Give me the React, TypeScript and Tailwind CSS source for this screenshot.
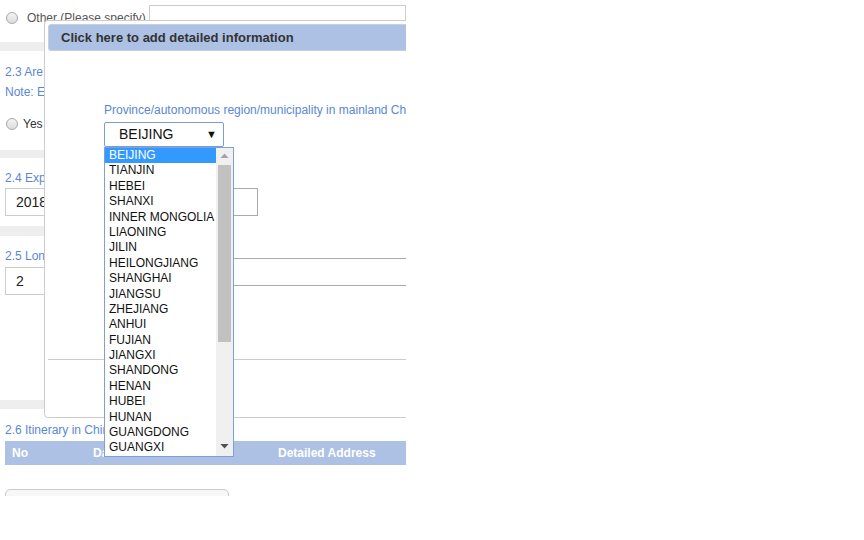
const provinces = [
  'BEIJING',
  'TIANJIN',
  'HEBEI',
  'SHANXI',
  'INNER MONGOLIA',
  'LIAONING',
  'JILIN',
  'HEILONGJIANG',
  'SHANGHAI',
  'JIANGSU',
  'ZHEJIANG',
  'ANHUI',
  'FUJIAN',
  'JIANGXI',
  'SHANDONG',
  'HENAN',
  'HUBEI',
  'HUNAN',
  'GUANGDONG',
  'GUANGXI',
]

function Radio() {
  return (
    <span className="inline-block h-[12px] w-[12px] flex-none rounded-full border border-[#a9a9a9] bg-gradient-to-b from-[#f4f4f4] to-[#dcdcdc]" />
  )
}

function Band({ className = '' }: { className?: string }) {
  return <div className={'w-full bg-[#eeeeee] ' + className} />
}

export default function App() {
  return (
    <div className="h-[540px] w-[864px] bg-white font-['Liberation_Sans',Arial,sans-serif]">
      <div className="relative h-[496px] w-[406px] overflow-hidden">
        {/* form underneath */}
        <div className="flex h-[42px] items-start pt-[5px]">
          <div className="flex items-center pl-[6px] pt-[5px]">
            <Radio />
            <span className="ml-[9px] text-[12px] leading-[16px] text-[#555]">
              Other (Please specify)
            </span>
          </div>
          <div className="ml-auto h-[26px] w-[257px] border border-[#cccccc]" />
        </div>
        <Band className="h-[9px]" />

        <div className="px-[5px] pt-[13px] text-[12px] leading-[16px] text-[#5a87d3]">
          <p>2.3 Are you travelling with others?</p>
          <p className="mt-[4px]">Note: Enter family members</p>
        </div>
        <div className="mt-[16px] flex items-center pl-[6px]">
          <Radio />
          <span className="ml-[5px] text-[12px] leading-[16px] text-[#333]">Yes</span>
        </div>
        <Band className="mt-[18px] h-[8px]" />

        <div className="px-[5px] pt-[12px]">
          <p className="text-[12px] leading-[16px] text-[#5a87d3]">2.4 Expected date</p>
          <div className="mt-[2px] flex h-[28px] w-[253px] items-center border border-[#cccccc] pl-[10px] text-[14px] text-[#222]">
            2018-06-12
          </div>
        </div>
        <Band className="mt-[10px] h-[10px]" />

        <div className="px-[5px] pt-[12px]">
          <p className="text-[12px] leading-[16px] text-[#5a87d3]">2.5 Longest stay</p>
          <div className="mt-[3px] flex h-[28px] w-[253px] items-center border border-[#cccccc] pl-[10px] text-[14px] text-[#222]">
            2
          </div>
        </div>
        <Band className="mt-[105px] h-[9px]" />

        <div className="pl-[5px] pt-[13px]">
          <p className="text-[12px] leading-[16px] text-[#5a87d3]">2.6 Itinerary in China</p>
          <div className="mt-[3px] flex h-[24px] items-center bg-[#adc1e4] pl-[7px] text-[12px] font-bold text-white">
            <span className="w-[81px]">No</span>
            <span className="w-[185px]">Date</span>
            <span>Detailed Address</span>
          </div>
          <div className="mt-[24px] h-[30px] w-[224px] rounded-[5px] border border-[#cccccc] bg-[#f7f7f7]" />
        </div>

        {/* modal */}
        <div className="absolute left-[44px] top-[20px] flex h-[398px] w-[430px] flex-col rounded-[4px] border border-[#cccccc] bg-white p-[3px]">
          <div className="flex h-[27px] items-center rounded-[3px] border border-[#c4cfe0] bg-[#adc1e4] pl-[12px] text-[13px] font-bold text-[#333]">
            Click here to add detailed information
          </div>
          <div className="pl-[56px]">
            <p className="mt-[51px] whitespace-nowrap text-[12px] leading-[16px] text-[#5a87d3]">
              Province/autonomous region/municipality in mainland China
            </p>
            <div className="mt-[4px] flex h-[25px] w-[120px] items-center justify-between rounded-[2px] border border-[#7b9cd6] pl-[14px] pr-[6px] text-[14px] text-[#111]">
              <span>BEIJING</span>
              <span className="text-[11px] leading-none">▼</span>
            </div>
            <div className="mt-[41px] h-[28px] w-[154px] border border-[#aaaaaa]" />
            <div className="mt-[42px] h-[28px] w-[320px] border border-[#aaaaaa]" />
          </div>
          <div className="mt-[73px] border-t border-[#cccccc]" />
        </div>

        {/* open dropdown list */}
        <div className="absolute left-[104px] top-[147px] flex h-[310px] w-[130px] border border-[#7f9fdb] bg-white">
          <ul className="flex-1">
            {provinces.map((p, i) => (
              <li
                key={p}
                className={
                  'h-[15.4px] whitespace-nowrap pl-[4px] text-[12px] leading-[15.4px] ' +
                  (i === 0 ? 'bg-[#3399ff] text-white' : 'text-[#111]')
                }
              >
                {p}
              </li>
            ))}
          </ul>
          <div className="flex w-[17px] flex-none flex-col items-center bg-[#f0f0f0] px-[2px]">
            <svg width="9" height="17" viewBox="0 0 9 17" className="flex-none">
              <path d="M0.5 10 L4.5 5.5 L8.5 10 Z" fill="#a3a3a3" />
            </svg>
            <div className="h-[177px] w-[13px] bg-[#c1c1c1]" />
            <div className="flex-1" />
            <svg width="9" height="17" viewBox="0 0 9 17" className="flex-none">
              <path d="M0.5 5 L4.5 9.5 L8.5 5 Z" fill="#505050" />
            </svg>
          </div>
        </div>
      </div>
    </div>
  )
}
